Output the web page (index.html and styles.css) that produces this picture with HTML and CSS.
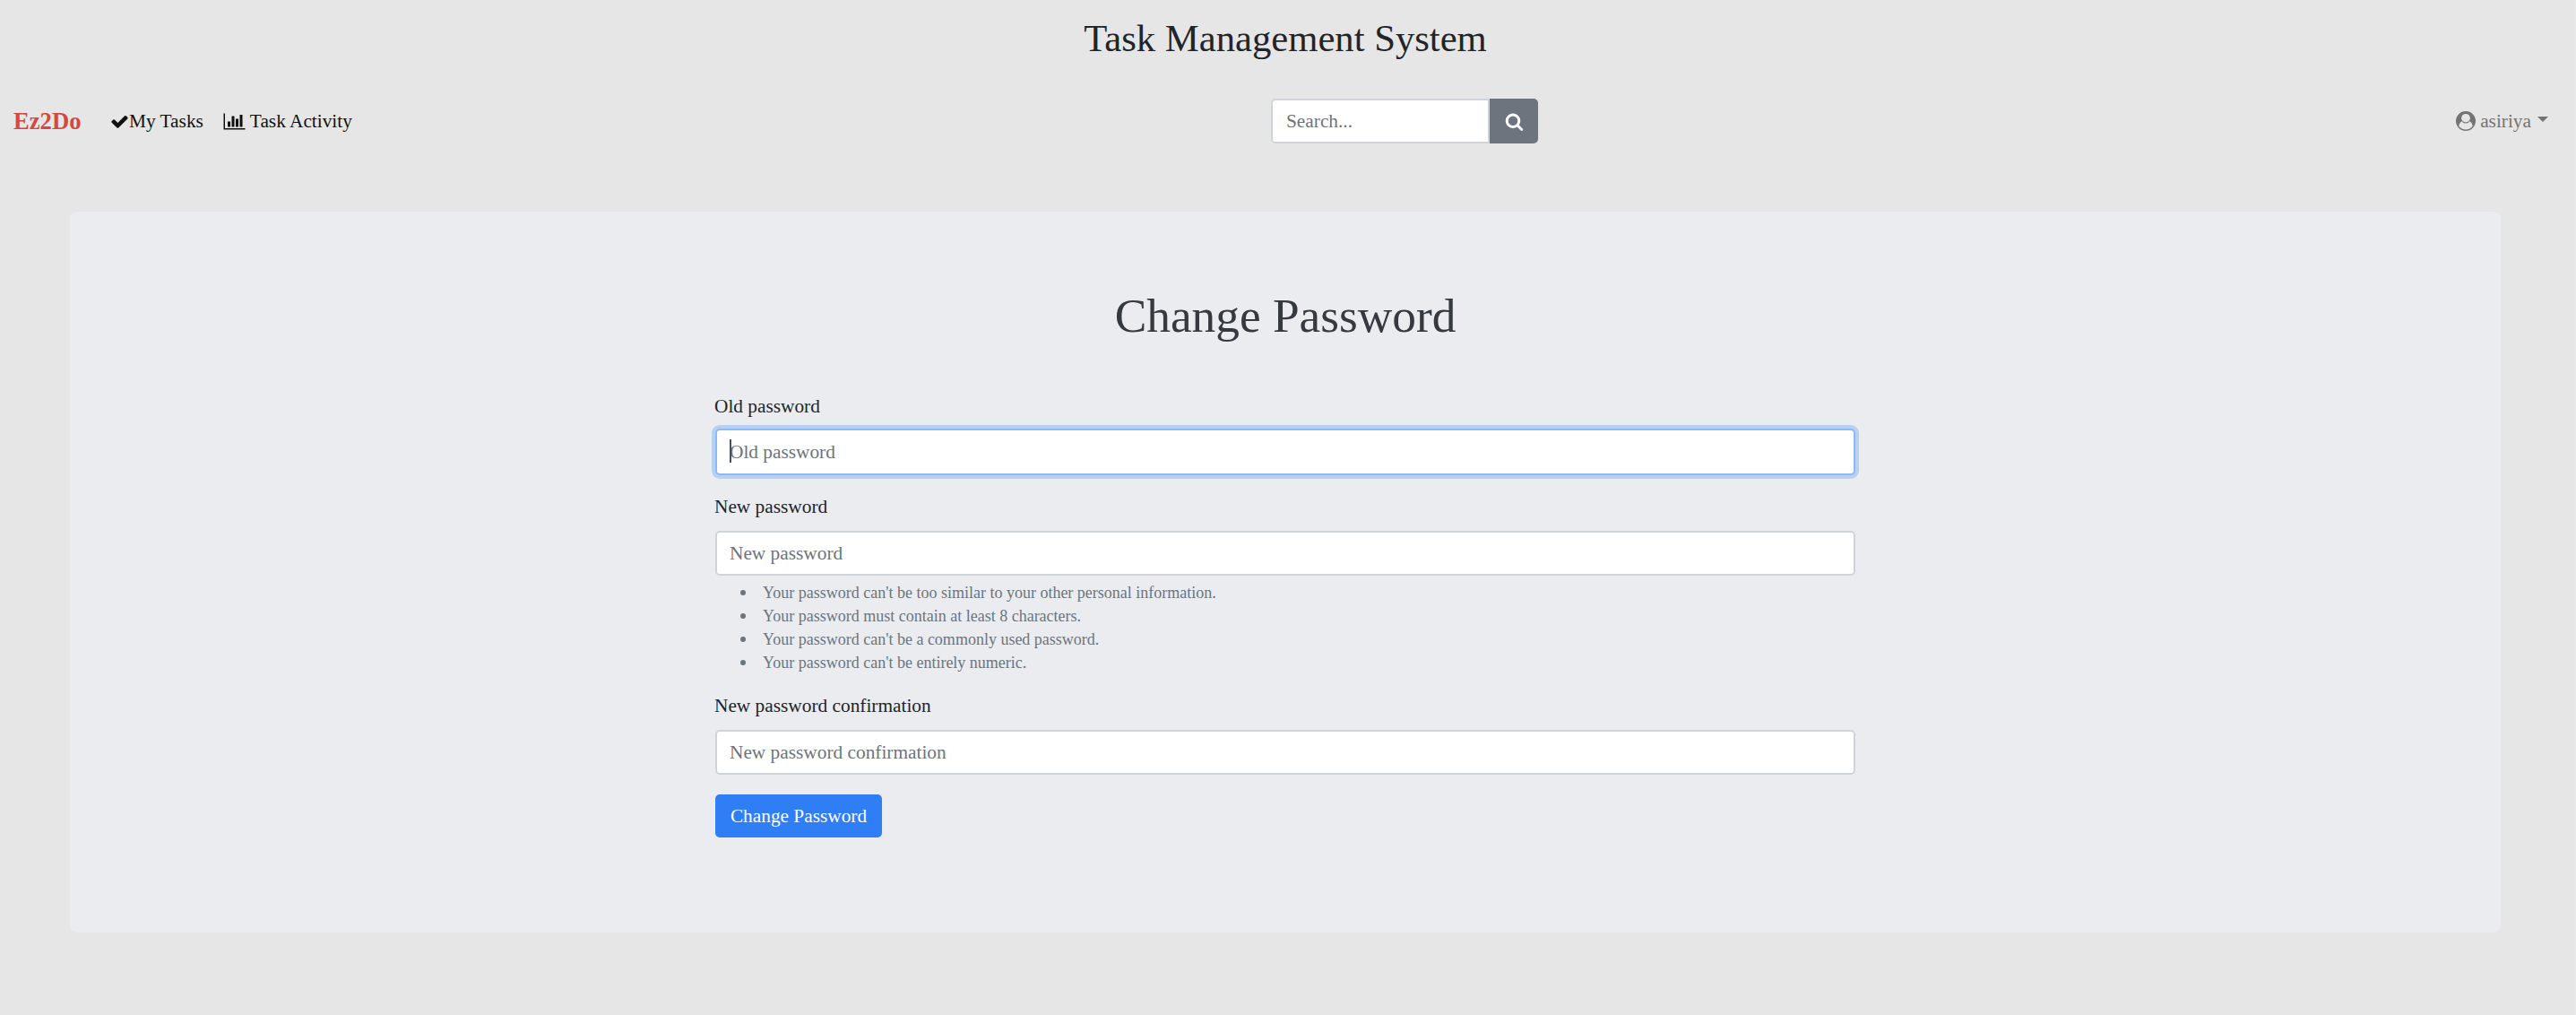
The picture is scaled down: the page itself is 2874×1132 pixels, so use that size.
FILE: index.html
```html
<!DOCTYPE html>
<html lang="en">
<head>
<meta charset="utf-8">
<title>Change Password</title>
<link rel="stylesheet" href="styles.css">
</head>
<body>
<header class="banner"><h1 class="site-title">Task Management System</h1></header>
<nav class="navbar">
  <div class="nav-left">
    <a class="brand">Ez2Do</a>
    <a class="nav-link link-tasks"><svg class="icon-check" viewBox="0 0 1792 1792"><path d="M1671 566q0 40-28 68l-724 724-136 136q-28 28-68 28t-68-28l-136-136-362-362q-28-28-28-68t28-68l136-136q28-28 68-28t68 28l294 295 656-657q28-28 68-28t68 28l136 136q28 28 28 68z"/></svg><span>My Tasks</span></a>
    <a class="nav-link link-activity"><svg class="icon-chart" viewBox="0 0 2048 1792"><path d="M640 896v512h-256v-512h256zm384-512v1024h-256v-1024h256zm1024 1152v128h-2048v-1536h128v1408h1920zm-640-896v768h-256v-768h256zm384-384v1152h-256v-1152h256z"/></svg><span>Task Activity</span></a>
  </div>
  <form class="search">
    <input class="search-input" type="text" placeholder="Search...">
    <button class="search-button" type="button" aria-label="Search"><svg class="icon-search" viewBox="0 0 1792 1792"><path d="M1216 832q0-185-131.500-316.500t-316.500-131.500-316.500 131.500-131.500 316.500 131.500 316.500 316.500 131.500 316.500-131.500 131.500-316.500zm512 832q0 52-38 90t-90 38q-54 0-90-38l-343-342q-179 124-399 124-143 0-273.500-55.500t-225-150-150-225-55.500-273.500 55.500-273.500 150-225 225-150 273.500-55.500 273.500 55.500 225 150 150 225 55.500 273.500q0 220-124 399l343 343q37 37 37 90z"/></svg></button>
  </form>
  <a class="user"><svg class="icon-user" viewBox="0 0 24 24"><path fill-rule="evenodd" d="M12 0a12 12 0 1 0 0 24 12 12 0 0 0 0-24zM12 3.300a5.100 5.100 0 0 1 3.700 8.800c2.800.7 4.300 3.200 4.700 6a10.300 10.300 0 0 1-16.800 0c.4-2.800 1.900-5.300 4.700-6A5.100 5.100 0 0 1 12 3.300z"/><path d="M8.300 12.100a5.300 5.300 0 0 0 7.400 0l.5 1a6 6 0 0 1-8.400 0z"/></svg><span>asiriya</span><span class="caret"></span></a>
</nav>
<main class="card">
  <form class="password-form">
    <h2 class="form-title">Change Password</h2>
    <div class="field">
      <label class="label label-first" for="old">Old password</label>
      <div class="input-wrap"><input class="input focused" id="old" type="password" placeholder="Old password"><span class="cursor"></span></div>
    </div>
    <div class="field">
      <label class="label" for="new">New password</label>
      <input class="input" id="new" type="password" placeholder="New password">
      <ul class="help">
        <li>Your password can't be too similar to your other personal information.</li>
        <li>Your password must contain at least 8 characters.</li>
        <li>Your password can't be a commonly used password.</li>
        <li>Your password can't be entirely numeric.</li>
      </ul>
    </div>
    <div class="field">
      <label class="label" for="confirm">New password confirmation</label>
      <input class="input" id="confirm" type="password" placeholder="New password confirmation">
    </div>
    <button class="submit" type="button">Change Password</button>
  </form>
</main>
</body>
</html>
```
FILE: styles.css
```css
* { box-sizing: border-box; }
html { background: #e9e9e9; overflow: hidden; }
body {
  margin: 0;
  width: 2872px;
  min-height: 1132px;
  padding-right: 4px;
  background: #e6e6e6;
  color: #212529;
  font: 21.33px/32px "Liberation Serif", serif;
}
input, button { font: inherit; margin: 0; }
svg { display: block; fill: currentColor; flex: none; }

.banner { height: 84px; padding-top: 17px; text-align: center; }
.site-title { margin: 0; font-size: 42.67px; line-height: 51px; font-weight: 400; }

.navbar { display: flex; align-items: center; justify-content: space-between; height: 102px; padding: 0 25px 0 15px; }
.nav-left { display: flex; align-items: center; width: 1403px; color: #111; }
.brand { width: 108px; color: #d34940; font-size: 26.67px; font-weight: 700; }
.nav-link { display: flex; align-items: center; }
.link-activity { margin-left: 22px; gap: 5px; }
.icon-check { width: 21px; height: 21px; }
.icon-chart { width: 25px; height: 21px; }
.search { display: flex; width: 298px; height: 50px; }
.search-input {
  width: 244px; height: 50px; padding: 0 15px;
  border: 2px solid #ced4da; border-radius: 5px 0 0 5px; background: #fff;
}
.search-button {
  display: flex; align-items: center; justify-content: center;
  width: 54px; padding: 0; border: 0; border-radius: 0 5px 5px 0;
  background: #6c757d; color: #fff;
}
.icon-search { width: 21px; height: 21px; }
.user { display: flex; align-items: center; margin-left: auto; color: #737373; }
.icon-user { width: 22px; height: 22px; margin-right: 5px; }
.caret { margin: -5px 0 0 7px; border: 6px solid transparent; border-top-color: currentColor; border-bottom: 0; }

.card { width: 2712px; height: 804px; margin: 50px 0 0 78px; border-radius: 8px; background: #ebecf0; }
.password-form { width: 1272px; margin: 0 auto; padding-top: 84px; color: #343a40; }
.form-title { margin: 0 0 53px; font-size: 53.33px; line-height: 64px; font-weight: 400; text-align: center; }
.field { margin-bottom: 21px; }
.label { display: block; height: 32px; margin: 0 0 11px -1px; color: #212529; }
.label-first { margin-bottom: 9px; }
.input-wrap { position: relative; margin-bottom: 19px; }
.field:has(.input-wrap) { margin-bottom: 19px; }
.input {
  display: block; width: 100%; height: 50px; padding: 0 14px;
  border: 2px solid #ced4da; border-radius: 5px; background: #fff;
}
::placeholder { color: #6c757d; opacity: 1; }
.focused { height: 52px; border-color: #8abbf9; box-shadow: 0 0 0 4px #b9d0f3; }
.cursor { position: absolute; left: 16px; top: 12px; width: 2px; height: 26px; background: #495057; }
.help { margin: 6px 0 19px; padding-left: 28px; color: #6c757d; font-size: 18px; line-height: 26px; list-style: none; }
.field:has(.help) { margin-bottom: 19px; }
.help li { display: flex; align-items: center; gap: 19px; }
.help li::before { content: ""; width: 6px; height: 6px; border-radius: 50%; background: currentColor; }
.submit {
  display: block; width: 186px; height: 48px; margin-top: 22px; padding: 0; border: 0; border-radius: 5px;
  background: #307ef6; color: #fff;
}
```
